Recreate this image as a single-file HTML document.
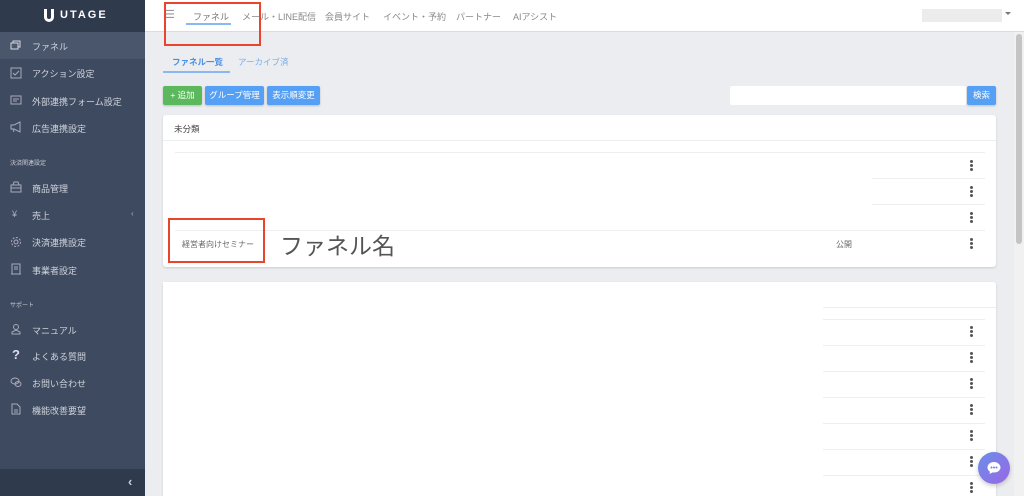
<!DOCTYPE html>
<html style="width:1024px;height:496px;overflow:hidden"><head><meta charset="utf-8"><style>
*{box-sizing:border-box;margin:0;padding:0}
body{width:1024px;height:496px;overflow:hidden;background:#ebedf0;font-family:"Liberation Sans","Noto Sans CJK JP",sans-serif;position:relative}
.a{position:absolute}
#sb{left:0;top:0;width:145px;height:496px;background:#3e4a5f}
.si{position:absolute;left:32px;font-size:9px;color:#d0d4dc;white-space:nowrap}
.ic{position:absolute;left:10px;width:12px;height:12px}
.sec{position:absolute;left:10px;font-size:6px;color:#c8ccd4}
.nav{position:absolute;top:10px;font-size:9px;color:#888;white-space:nowrap}
.card{position:absolute;background:#fff;border-radius:3px;box-shadow:0 1px 2px rgba(0,0,0,.15)}
.ln{position:absolute;height:1px;background:#eceef1}
.dots{position:absolute;width:3px;height:11px;left:970px}
.dots i{display:block;width:3px;height:3px;border-radius:50%;background:#555;margin-bottom:1px}
.red{position:absolute;border:2.5px solid #e8452c}
.btn{position:absolute;top:86px;height:19px;border-radius:2px;color:#fff;font-size:8.5px;line-height:19px;text-align:center;box-shadow:0 1px 2px rgba(0,0,0,.2)}
</style></head><body>
<div id="sb" class="a">
 <div class="a" style="left:0;top:0;width:145px;height:32px;background:#2f3a4c"></div>
 <div class="a" style="left:44px;top:9px;width:10px;height:13px;border:3px solid #fff;border-top:none;border-radius:0 0 5px 5px"></div>
 <div class="a" style="left:60px;top:9px;font-size:11px;font-weight:bold;letter-spacing:2px;color:#fff">UTAGE</div>
 <div class="a" style="left:0;top:32px;width:145px;height:27px;background:#4a566b"></div>
 <svg class="ic" style="top:39px" viewBox="0 0 12 12" fill="none" stroke="#d6dae2"><rect x="1" y="4" width="7" height="6"/><path d="M3 4V2h7v6H8"/></svg><div class="si" style="top:40px">ファネル</div>
 <svg class="ic" style="top:67px" viewBox="0 0 12 12" fill="none" stroke="#aab"><rect x="1" y="1" width="10" height="10"/><path d="M3 6l2 2 4-4"/></svg><div class="si" style="top:67px">アクション設定</div>
 <svg class="ic" style="top:94px" viewBox="0 0 12 12" fill="none" stroke="#aab"><rect x="1" y="2" width="10" height="8"/><path d="M3 5h6M3 7h4"/></svg><div class="si" style="top:95px">外部連携フォーム設定</div>
 <svg class="ic" style="top:121px" viewBox="0 0 12 12" fill="none" stroke="#aab"><path d="M1 4h3l6-3v10L4 8H1zM3 8l1 3"/></svg><div class="si" style="top:122px">広告連携設定</div>
 <div class="sec" style="top:158px">決済関連設定</div>
 <svg class="ic" style="top:181px" viewBox="0 0 12 12" fill="none" stroke="#aab"><rect x="1" y="4" width="10" height="7"/><path d="M3 4l1-3h4l1 3M1 7h10"/></svg><div class="si" style="top:182px">商品管理</div>
 <div class="a" style="left:12px;top:209px;font-size:9px;color:#aab">¥</div><div class="si" style="top:209px">売上</div><div class="a" style="left:131px;top:209px;font-size:8px;color:#aab">‹</div>
 <svg class="ic" style="top:236px" viewBox="0 0 12 12" fill="none" stroke="#aab"><circle cx="6" cy="6" r="2"/><circle cx="6" cy="6" r="4.5" stroke-dasharray="2 1.5"/></svg><div class="si" style="top:236px">決済連携設定</div>
 <svg class="ic" style="top:263px" viewBox="0 0 12 12" fill="none" stroke="#aab"><rect x="2" y="1" width="8" height="10"/><path d="M4 4h4M4 6h4M1 11h10"/></svg><div class="si" style="top:264px">事業者設定</div>
 <div class="sec" style="top:300px">サポート</div>
 <svg class="ic" style="top:323px" viewBox="0 0 12 12" fill="none" stroke="#aab"><circle cx="6" cy="4" r="2.5"/><path d="M2 11h8V9L6 7 2 9z"/></svg><div class="si" style="top:324px">マニュアル</div>
 <div class="a" style="left:12px;top:347px;font-size:13px;font-weight:bold;color:#dde">?</div><div class="si" style="top:350px">よくある質問</div>
 <svg class="ic" style="top:376px" viewBox="0 0 12 12" fill="none" stroke="#aab"><ellipse cx="5" cy="5" rx="4" ry="3"/><ellipse cx="8" cy="8" rx="3" ry="2.5"/></svg><div class="si" style="top:377px">お問い合わせ</div>
 <svg class="ic" style="top:403px" viewBox="0 0 12 12" fill="none" stroke="#aab"><path d="M2 1h5l3 3v7H2z"/><path d="M4 7h4M4 9h4"/></svg><div class="si" style="top:404px">機能改善要望</div>
 <div class="a" style="left:0;top:469px;width:145px;height:27px;background:#2f3a4c"></div>
 <div class="a" style="left:128px;top:474px;font-size:13px;color:#ccd;font-weight:bold">‹</div>
</div>
<div class="a" style="left:145px;top:0;width:879px;height:32px;background:#fff;border-bottom:1px solid #d8dbe0"></div>
<div class="a" style="left:165px;top:8px;font-size:11px;color:#999">☰</div>
<div class="nav" style="left:193px;color:#777">ファネル</div>
<div class="a" style="left:186px;top:23px;width:45px;height:2px;background:#8ab8f0"></div>
<div class="nav" style="left:242px">メール・LINE配信</div>
<div class="nav" style="left:325px">会員サイト</div>
<div class="nav" style="left:383px">イベント・予約</div>
<div class="nav" style="left:456px">パートナー</div>
<div class="nav" style="left:513px">AIアシスト</div>
<div class="a" style="left:922px;top:9px;width:80px;height:13px;background:#ececec"></div>
<div class="a" style="left:1005px;top:12px;border:3px solid transparent;border-top:3px solid #777"></div>
<div class="a" style="left:1014px;top:32px;width:10px;height:464px;background:#f1f1f1"></div>
<div class="a" style="left:1016px;top:34px;width:6px;height:210px;background:#c4c4c4;border-radius:3px"></div>
<div class="red" style="left:164px;top:2px;width:97px;height:44px"></div>
<div class="a" style="left:172px;top:56px;font-size:8.5px;color:#4a90e2;font-weight:bold">ファネル一覧</div>
<div class="a" style="left:163px;top:71px;width:67px;height:2px;background:#8ab8f0"></div>
<div class="a" style="left:238px;top:56px;font-size:8.5px;color:#7aaee8">アーカイブ済</div>
<div class="btn" style="left:163px;width:39px;background:#5cb85c">+ 追加</div>
<div class="btn" style="left:205px;width:59px;background:#55a0f5">グループ管理</div>
<div class="btn" style="left:267px;width:53px;background:#55a0f5">表示順変更</div>
<div class="a" style="left:730px;top:86px;width:236px;height:19px;background:#fff;border-radius:2px"></div>
<div class="btn" style="left:967px;width:29px;background:#55a0f5">検索</div>
<div class="card" style="left:163px;top:115px;width:833px;height:152px">
 <div class="a" style="left:11px;top:8px;font-size:8.5px;color:#444">未分類</div>
 <div class="ln" style="left:0;top:25px;width:833px"></div>
 <div class="ln" style="left:12px;top:37px;width:810px"></div>
 <div class="ln" style="left:709px;top:63px;width:113px"></div>
 <div class="ln" style="left:709px;top:89px;width:113px"></div>
 <div class="ln" style="left:12px;top:115px;width:810px"></div>
 <div class="a" style="left:19px;top:124px;font-size:8px;color:#666">経営者向けセミナー</div>
 <div class="a" style="left:117px;top:112px;font-size:23px;color:#555">ファネル名</div>
 <div class="a" style="left:673px;top:124px;font-size:8px;color:#666">公開</div>
</div>
<div class="dots" style="top:160px"><i></i><i></i><i></i></div>
<div class="dots" style="top:186px"><i></i><i></i><i></i></div>
<div class="dots" style="top:212px"><i></i><i></i><i></i></div>
<div class="dots" style="top:238px"><i></i><i></i><i></i></div>
<div class="red" style="left:168px;top:218px;width:97px;height:45px"></div>
<div class="card" style="left:163px;top:282px;width:833px;height:214px;border-radius:3px 3px 0 0">
 <div class="ln" style="left:0;top:25px;width:833px"></div>
 <div class="ln" style="left:660px;top:37px;width:162px"></div>
 <div class="ln" style="left:660px;top:63px;width:162px"></div>
 <div class="ln" style="left:660px;top:89px;width:162px"></div>
 <div class="ln" style="left:660px;top:115px;width:162px"></div>
 <div class="ln" style="left:660px;top:141px;width:162px"></div>
 <div class="ln" style="left:660px;top:167px;width:162px"></div>
 <div class="ln" style="left:660px;top:193px;width:162px"></div>
 <div class="a" style="left:0;top:0;width:660px;height:207px;background:#fff"></div>
</div>
<div class="dots" style="top:326px"><i></i><i></i><i></i></div>
<div class="dots" style="top:352px"><i></i><i></i><i></i></div>
<div class="dots" style="top:378px"><i></i><i></i><i></i></div>
<div class="dots" style="top:404px"><i></i><i></i><i></i></div>
<div class="dots" style="top:430px"><i></i><i></i><i></i></div>
<div class="dots" style="top:456px"><i></i><i></i><i></i></div>
<div class="dots" style="top:482px"><i></i><i></i><i></i></div>
<div class="a" style="left:978px;top:452px;width:32px;height:32px;border-radius:50%;background:linear-gradient(135deg,#6a8fe8,#9a66e6);box-shadow:0 2px 4px rgba(0,0,0,.2)"></div>
<svg class="a" style="left:986px;top:460px" width="16" height="16" viewBox="0 0 16 16"><path d="M8 2C4 2 1.5 4.5 1.5 7.5c0 2 1 3.3 2.5 4.2L3.5 14l3-1.6c.5.1 1 .1 1.5.1 4 0 6.5-2.5 6.5-5S12 2 8 2z" fill="#fff"/><circle cx="5.5" cy="7.5" r="1" fill="#7a7ae6"/><circle cx="8" cy="7.5" r="1" fill="#7a7ae6"/><circle cx="10.5" cy="7.5" r="1" fill="#7a7ae6"/></svg>
</body></html>
